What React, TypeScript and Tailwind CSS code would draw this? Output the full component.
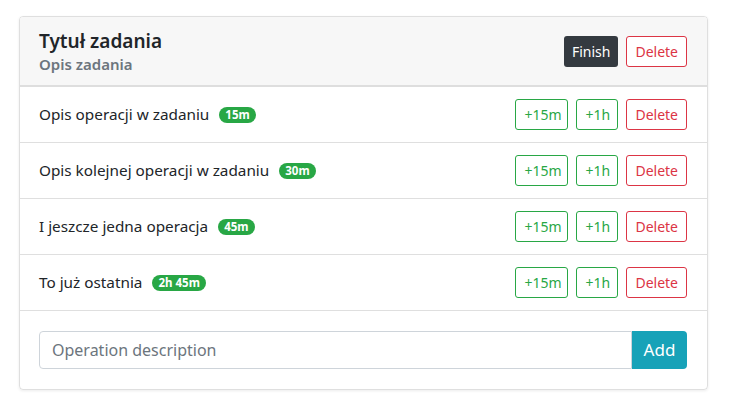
import { useState } from 'react';

type Operation = { id: number; desc: string; time: string };

const initial: Operation[] = [
  { id: 1, desc: 'Opis operacji w zadaniu', time: '15m' },
  { id: 2, desc: 'Opis kolejnej operacji w zadaniu', time: '30m' },
  { id: 3, desc: 'I jeszcze jedna operacja', time: '45m' },
  { id: 4, desc: 'To już ostatnia', time: '2h 45m' },
];

const btnSm = 'h-[31px] px-2 rounded-[3px] border text-[14px] leading-[21px] bg-white';

export default function App() {
  const [ops, setOps] = useState(initial);
  const [text, setText] = useState('');

  return (
    <div className="min-h-screen bg-white pt-4 px-[19px] text-[#212529]" style={{ fontFamily: '"Noto Sans", "Open Sans", sans-serif' }}>
      <div className="w-[689px] border border-black/[.125] rounded-[4px] shadow-[0_1px_3px_rgba(0,0,0,0.08)] overflow-hidden">
        {/* HEADER */}
        <header className="flex justify-between items-center bg-[#f7f7f7] border-b-2 border-[#dedede] pl-[19px] pr-5 h-[70px]">
          <div className="pt-[2px]">
            <h2 className="text-[19px] leading-[24px] font-semibold">Tytuł zadania</h2>
            <p className="text-[15px] leading-[22px] font-semibold text-[#6c757d]">Opis zadania</p>
          </div>
          <div className="flex gap-2">
            <button className="h-[31px] px-2 rounded-[3px] bg-[#343a40] text-white text-[14px] leading-[21px]">Finish</button>
            <button className={`${btnSm} border-[#dc3545] text-[#dc3545]`}>Delete</button>
          </div>
        </header>

        {/* OPERATIONS */}
        <ul>
          {ops.map(o => (
            <li key={o.id} className="flex items-center justify-between h-[56px] pl-[19px] pr-5 border-b border-black/[.125]">
              <div className="flex items-center gap-[10px]">
                <span className="text-[15.3px]">{o.desc}</span>
                <span className="bg-[#28a745] text-white rounded-full px-[6px] text-[11.5px] leading-[16px] font-bold">{o.time}</span>
              </div>
              <div className="flex gap-2">
                <button className={`${btnSm} w-[53px] border-[#28a745] text-[#28a745]`}>+15m</button>
                <button className={`${btnSm} w-[42px] border-[#28a745] text-[#28a745]`}>+1h</button>
                <button className={`${btnSm} border-[#dc3545] text-[#dc3545]`} onClick={() => setOps(ops.filter(x => x.id !== o.id))}>Delete</button>
              </div>
            </li>
          ))}
        </ul>

        {/* ADD FORM */}
        <div className="pl-[19px] pr-5 py-5 flex">
          <input
            className="flex-1 h-[38px] border border-[#ced4da] rounded-l-[4px] px-3 text-[16px] outline-none placeholder:text-[#6c757d]"
            placeholder="Operation description"
            value={text}
            onChange={e => setText(e.target.value)}
          />
          <button className="h-[38px] w-[55px] bg-[#17a2b8] text-white text-[17px] rounded-r-[4px]">Add</button>
        </div>
      </div>
    </div>
  );
}
